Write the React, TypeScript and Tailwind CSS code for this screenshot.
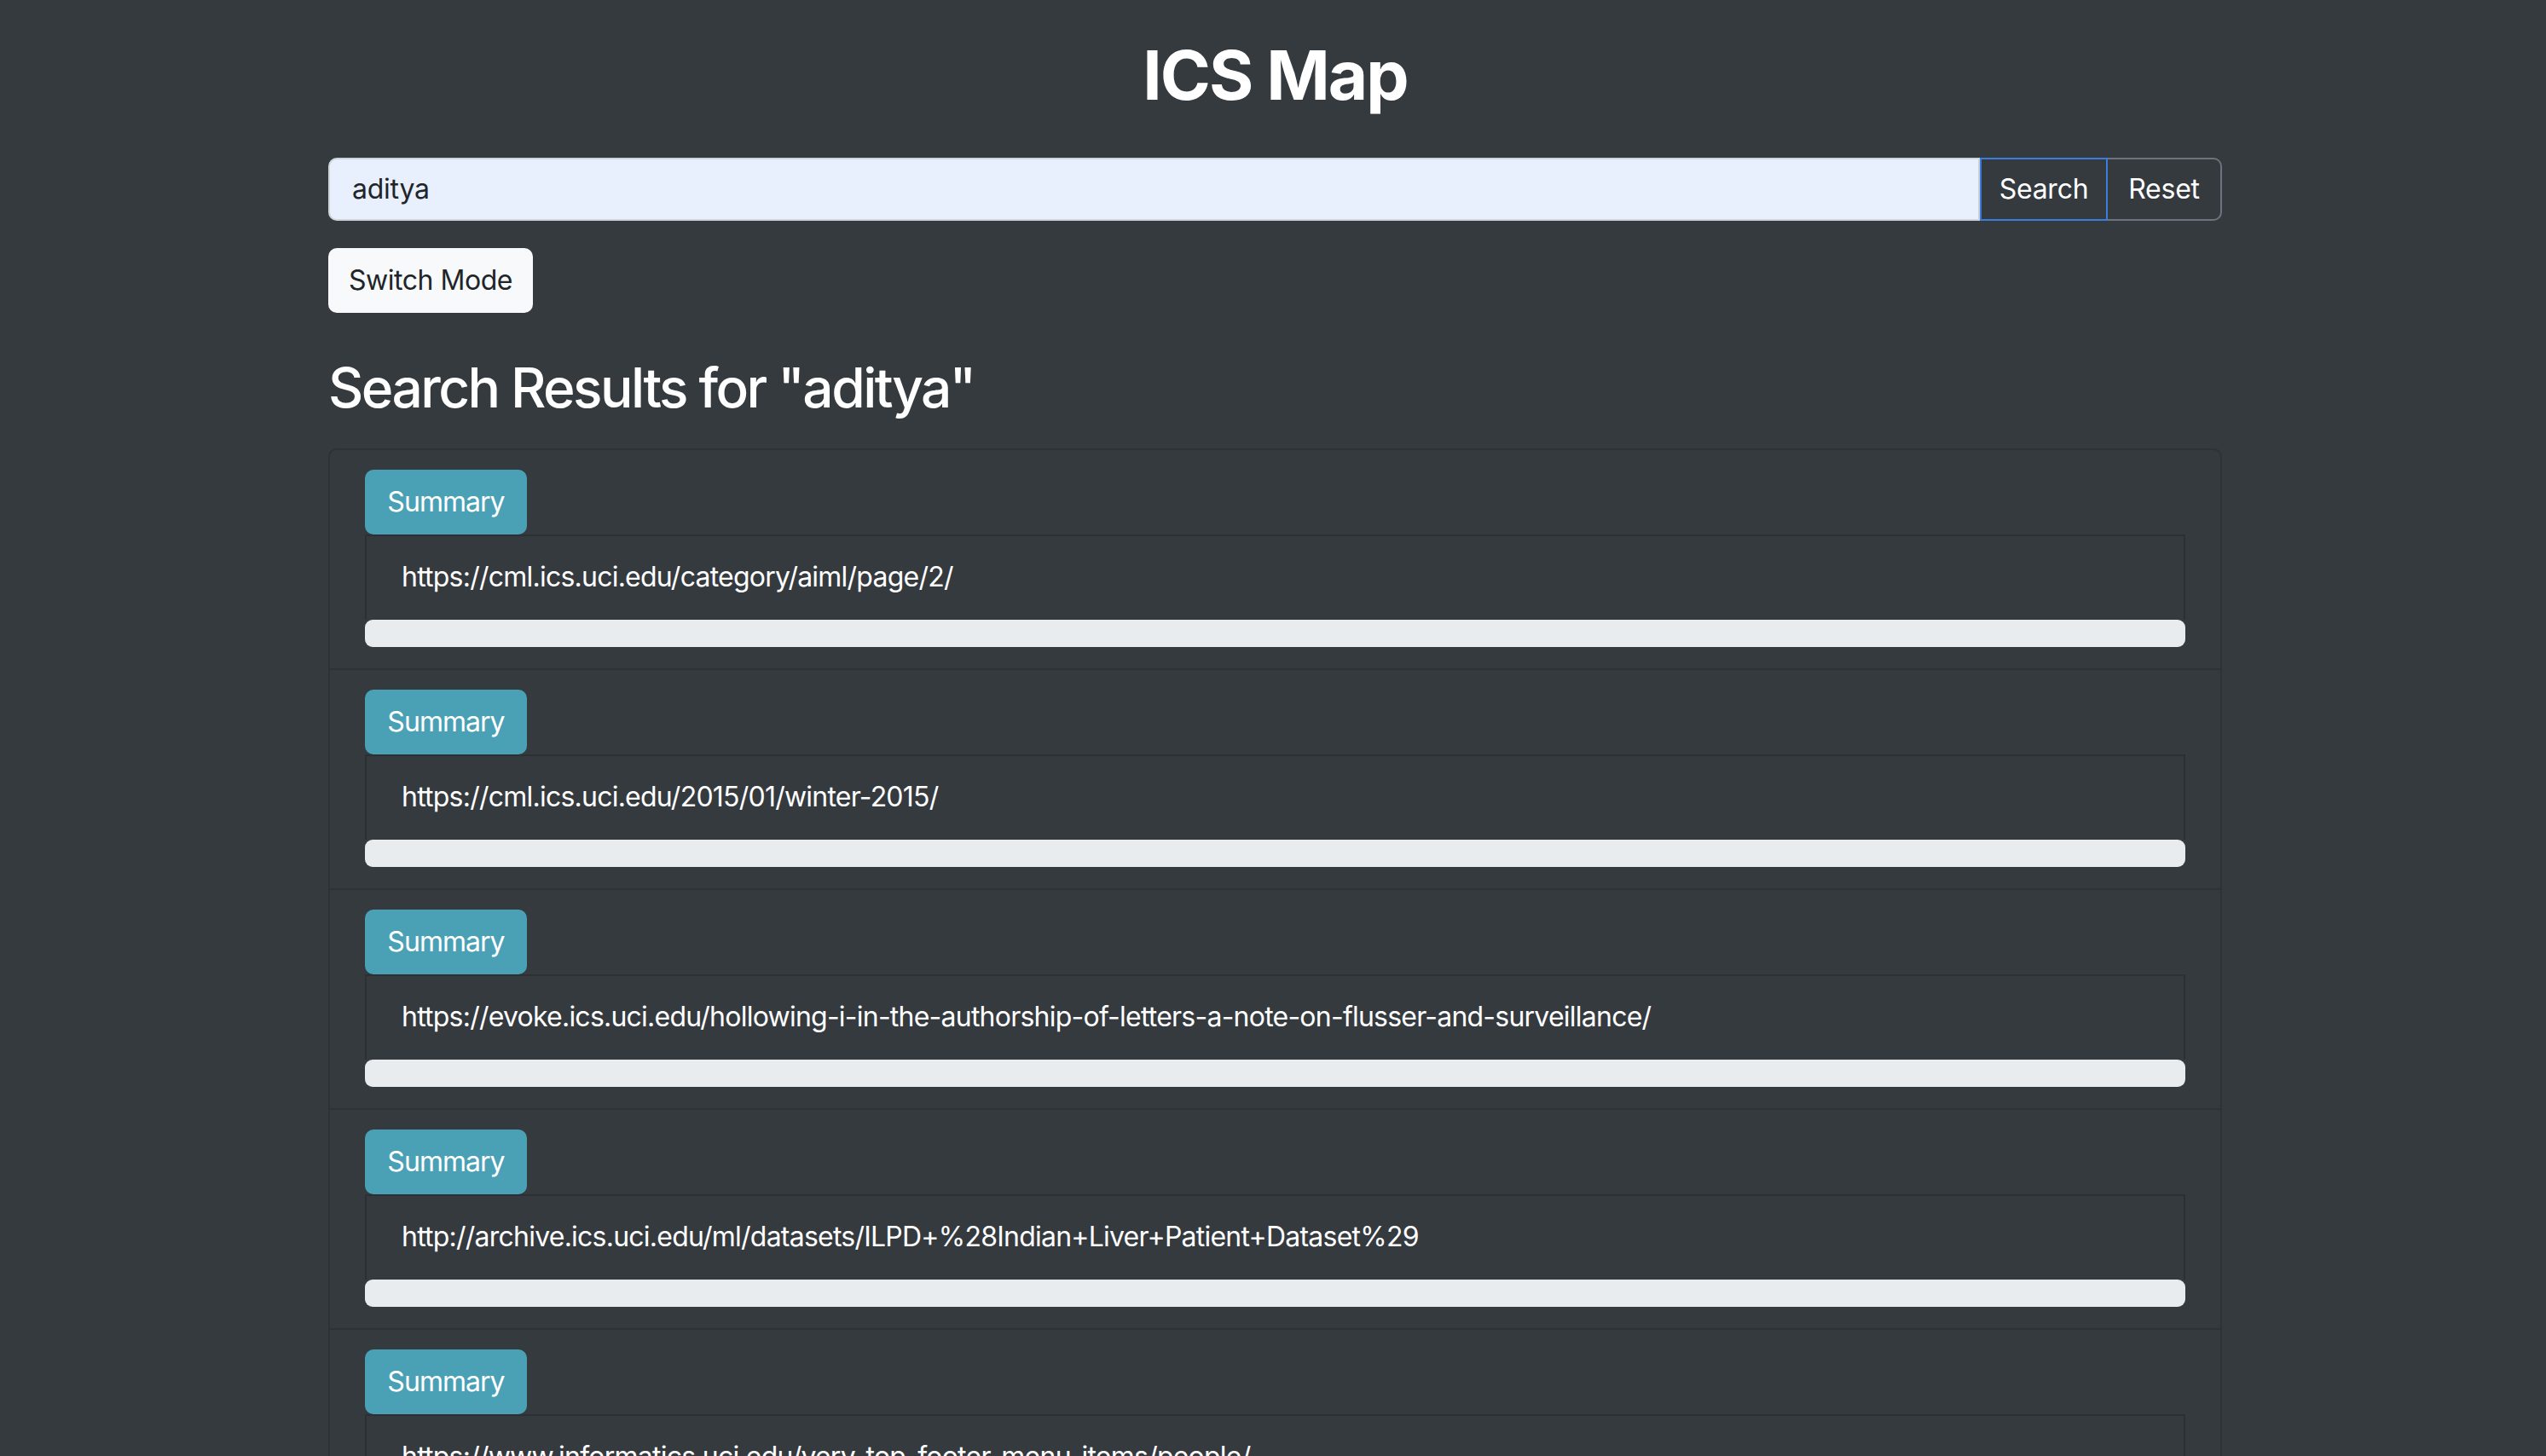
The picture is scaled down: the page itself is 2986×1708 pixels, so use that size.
import React from 'react';

const RESULTS = [
  'https://cml.ics.uci.edu/category/aiml/page/2/',
  'https://cml.ics.uci.edu/2015/01/winter-2015/',
  'https://evoke.ics.uci.edu/hollowing-i-in-the-authorship-of-letters-a-note-on-flusser-and-surveillance/',
  'http://archive.ics.uci.edu/ml/datasets/ILPD+%28Indian+Liver+Patient+Dataset%29',
  'https://www.informatics.uci.edu/very-top-footer-menu-items/people/',
];

const ResultItem: React.FC<{ url: string; first: boolean }> = ({ url, first }) => (
  <div className={`px-[41px] pt-[23px] pb-[25px] ${first ? '' : 'border-t-2 border-[#2e3237]'}`}>
    <button className="h-[76px] w-[190px] rounded-[10px] bg-[#4aa1b5] text-[32px] tracking-[-0.03em] text-white">Summary</button>
    <div className="h-[100px] border-2 border-b-0 border-[#2c3035] pl-[41px] pt-[24px] text-[32px] leading-[48px] tracking-[-0.024em] text-white">
      {url}
    </div>
    <div className="h-[32px] rounded-[9px] bg-[#e9ecef]"></div>
  </div>
);

const App: React.FC = () => {
  return (
    <div className="min-h-screen bg-[#353a3f] font-['Inter',sans-serif] text-white">
      <div className="ml-[385px] w-[2221px]">
        <h1 className="pt-[40px] text-center text-[80px] font-bold leading-[96px] tracking-[-0.025em]">ICS Map</h1>

        <div className="mt-[49px] flex h-[74px] tracking-[-0.015em]">
          <div className="flex flex-1 items-center rounded-l-[10px] border-2 border-[#ced4da] bg-[#e8f0fe] pl-[26px] text-[32px] text-[#212529]">
            aditya
          </div>
          <button className="w-[150px] border-2 border-[#3b7ddd] text-[32px] text-white">Search</button>
          <button className="w-[134px] rounded-r-[10px] border-2 border-l-0 border-[#6c757d] text-[32px] text-white">Reset</button>
        </div>

        <button className="mt-[32px] h-[76px] w-[240px] rounded-[10px] bg-[#f8f9fa] text-[32px] tracking-[-0.015em] text-[#212529]">Switch Mode</button>

        <h2 className="mt-[49px] text-[64px] font-medium leading-[77px] tracking-[-0.04em]">Search Results for "aditya"</h2>

        <div className="mt-[33px] rounded-t-[10px] border-2 border-b-0 border-[#2e3237]">
          {RESULTS.map((url, i) => (
            <ResultItem key={url} url={url} first={i === 0} />
          ))}
        </div>
      </div>
    </div>
  );
};

export default App;
